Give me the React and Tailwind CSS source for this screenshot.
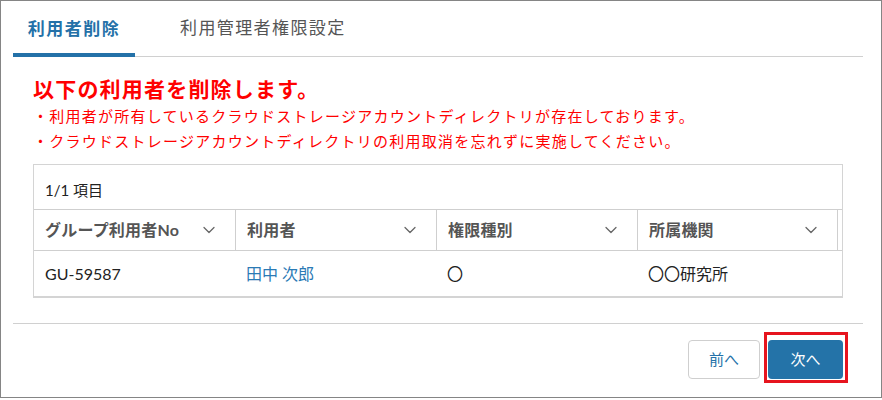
import { ChevronDown } from "lucide-react"

const font = { fontFamily: 'Lato, "Noto Sans CJK JP", sans-serif' }

const columns = ["グループ利用者No", "利用者", "権限種別", "所属機関"]

function HeaderCell({ label, last }) {
    return (
        <div
            className={`flex w-[201px] items-center justify-between border-l border-[#cfcfcf] pl-[11px] pr-[16px] first:border-l-0 ${last ? "border-r" : ""}`}
        >
            <span className="text-[16px] font-bold tracking-[0.2px] text-[#555]">{label}</span>
            <ChevronDown size={20} strokeWidth={1.5} className="text-[#666]" />
        </div>
    )
}

export default function App() {
    return (
        <div
            className="box-border h-[398px] w-[882px] border border-[#858585] bg-white pl-[12px] pr-[18px]"
            style={font}
        >
            {/* Tabs */}
            <div className="flex h-[56px] items-stretch border-b border-[#d0d0d0]">
                <div className="-mb-px flex w-[122px] items-center justify-center border-b-4 border-[#2471a8] pt-[4px]">
                    <span className="text-[17px] font-bold tracking-[1.5px] text-[#2471a8]">利用者削除</span>
                </div>
                <div className="ml-[30px] flex items-center px-[15px] pb-[2px]">
                    <span className="text-[17px] tracking-[1.4px] text-[#555]">利用管理者権限設定</span>
                </div>
            </div>

            {/* Body */}
            <div className="px-[20px] pt-[17px]">
                <h1 className="text-[21px] font-bold leading-[29px] tracking-[1.2px] text-[#ff0000]">
                    以下の利用者を削除します。
                </h1>
                <div className="mt-[1px] text-[15px] leading-[25px] tracking-[1.25px] text-[#ff0000]">
                    <p>・利用者が所有しているクラウドストレージアカウントディレクトリが存在しております。</p>
                    <p>・クラウドストレージアカウントディレクトリの利用取消を忘れずに実施してください。</p>
                </div>

                {/* Table */}
                <div className="mt-[10px] border border-b-2 border-[#d4d4d4]">
                    <div className="flex h-[44px] items-center pl-[11px] pt-[6px] text-[15px] text-[#222]">
                        1/1 項目
                    </div>
                    <div className="flex h-[42px] border-y border-[#cfcfcf]">
                        {columns.map((c, i) => (
                            <HeaderCell key={c} label={c} last={i === columns.length - 1} />
                        ))}
                    </div>
                    <div className="flex h-[45px] items-center text-[16px] text-[#222]">
                        <div className="w-[201px] pl-[11px]">GU-59587</div>
                        <div className="w-[201px] pl-[11px] text-[#2b7ab5]">田中 次郎</div>
                        <div className="w-[201px] pl-[11px]">〇</div>
                        <div className="w-[201px] pl-[11px]">〇〇研究所</div>
                    </div>
                </div>
            </div>

            {/* Footer */}
            <div className="mt-[25px] border-t border-[#d0d0d0] px-[20px] pt-[16px]">
                <div className="flex justify-end gap-[8px]">
                    <button className="h-[39px] w-[72px] rounded-[4px] border border-[#cfcfcf] bg-white text-[15px] text-[#2471a8]">
                        前へ
                    </button>
                    <div className="relative">
                        <button className="h-[39px] w-[75px] rounded-[4px] bg-[#2473a8] text-[15px] text-white">
                            次へ
                        </button>
                        <span className="pointer-events-none absolute -bottom-[4px] -left-[4px] -right-[5px] -top-[8px] border-[3px] border-[#e6141e]" />
                    </div>
                </div>
            </div>
        </div>
    )
}
